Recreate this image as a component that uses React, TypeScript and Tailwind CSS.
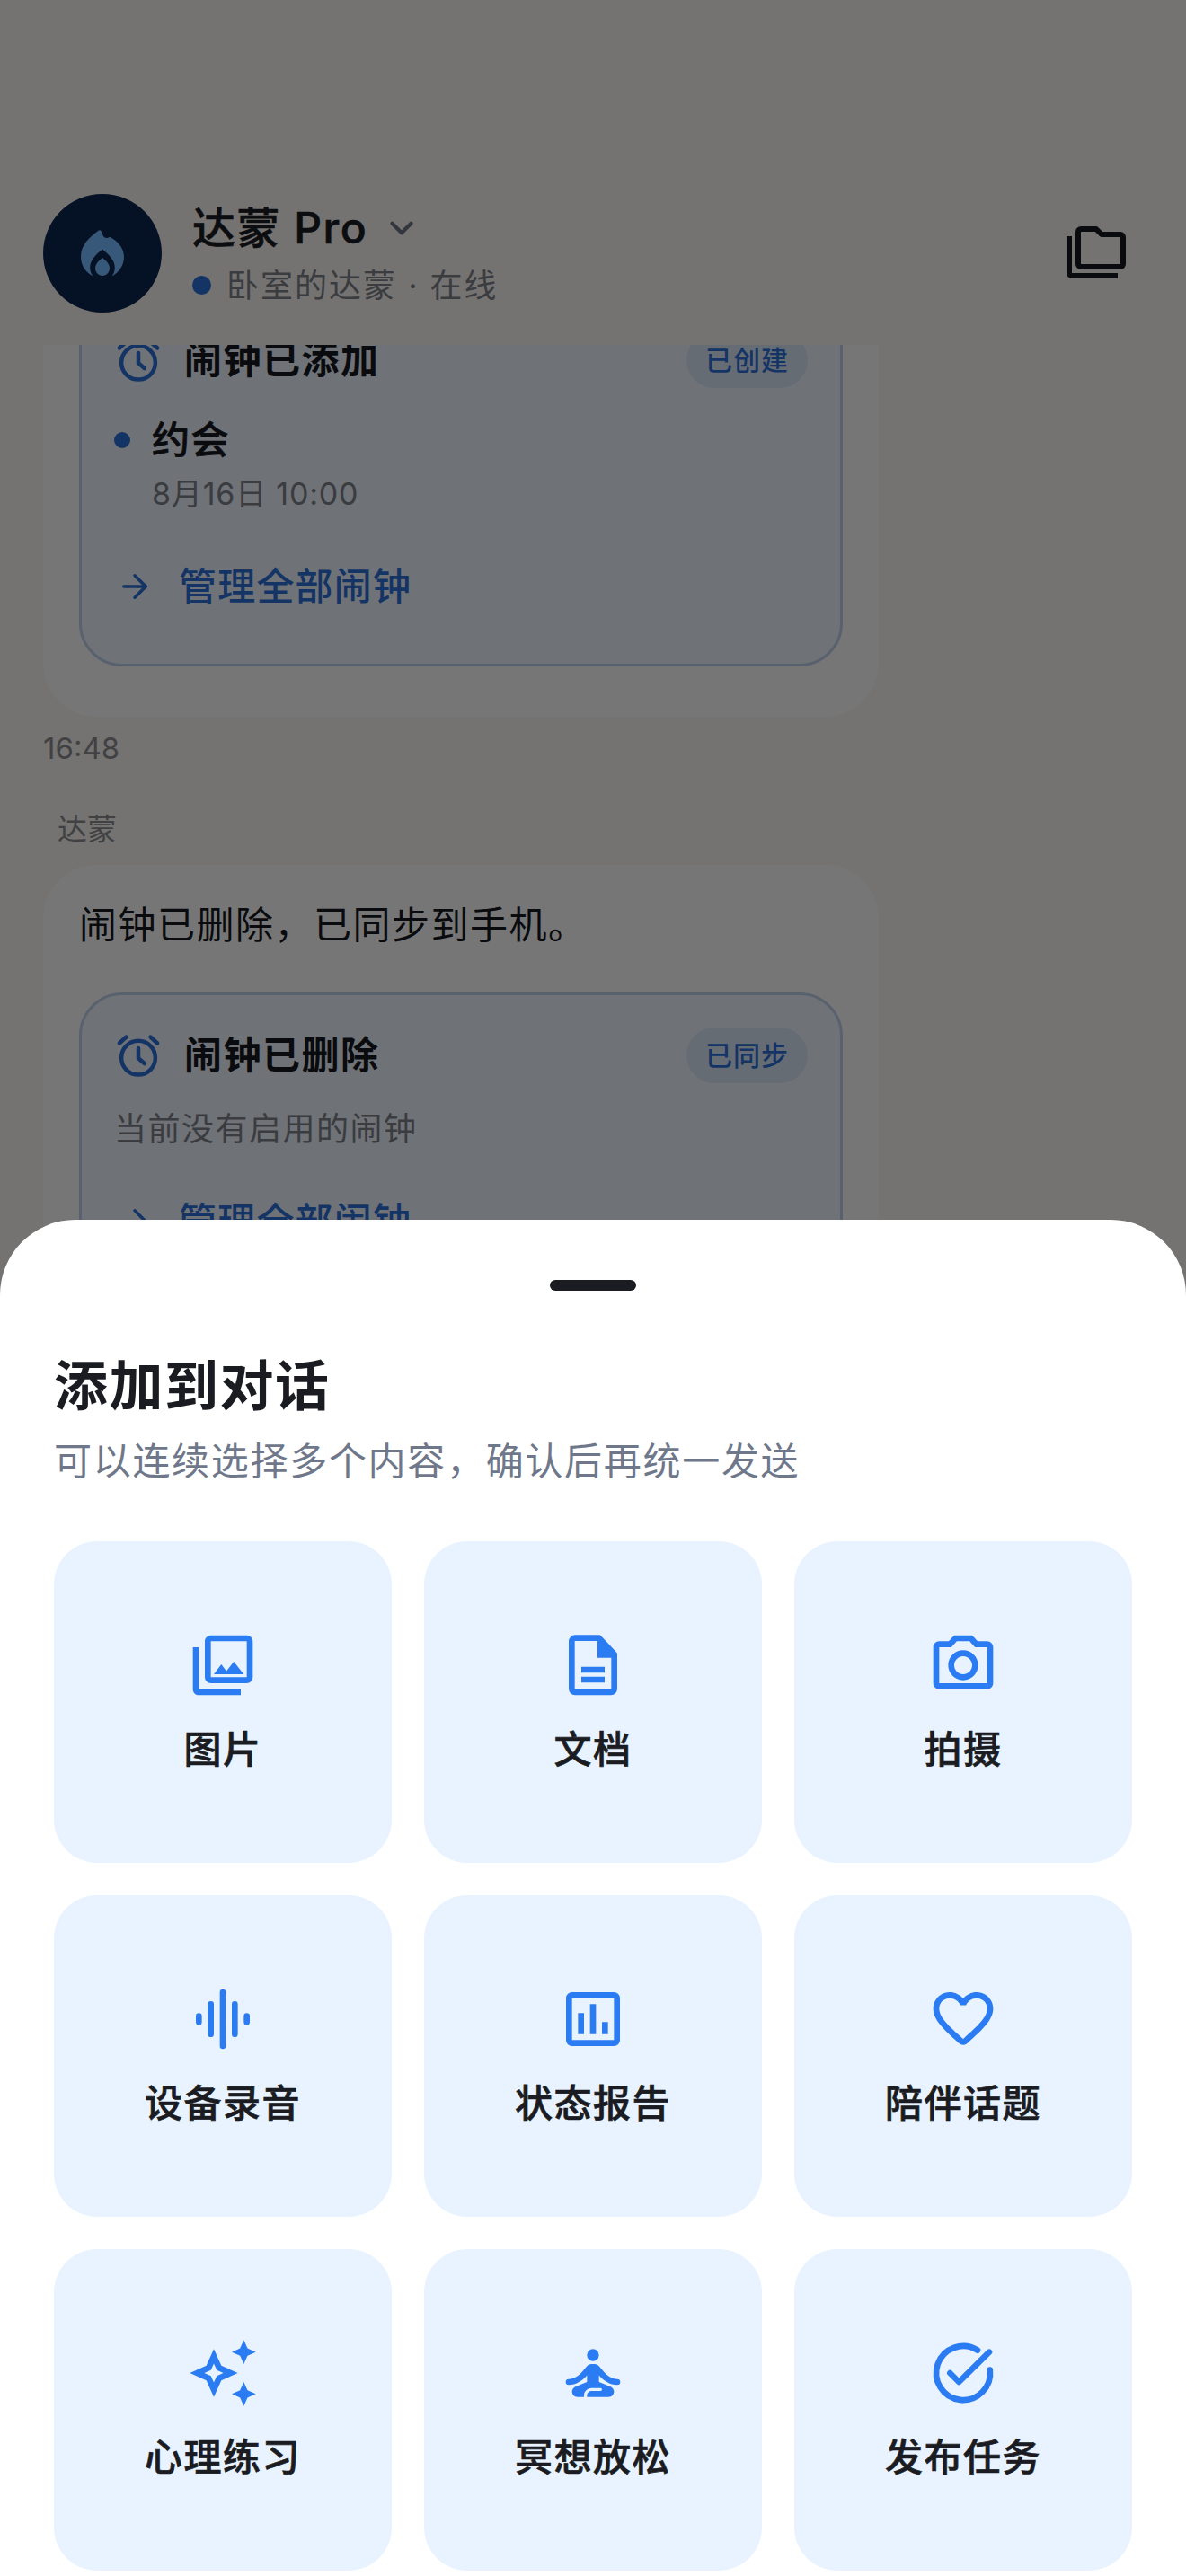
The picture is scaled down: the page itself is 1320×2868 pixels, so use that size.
import React from "react";
import { ChevronDown, ArrowRight } from "lucide-react";
import { MdOutlinePhotoLibrary, MdOutlinePhotoCamera, MdOutlineAssessment, MdOutlineAutoAwesome } from "react-icons/md";

const FONT = 'font-["Inter","Noto_Sans_CJK_SC",sans-serif]';

function AlarmIcon() {
  return (
    <svg viewBox="0 0 24 24" className="h-[54px] w-[54px] shrink-0" fill="none" stroke="#2b6fd6" strokeWidth="2" strokeLinecap="round">
      <circle cx="12" cy="13.2" r="8.4" />
      <path d="M12 8.4v5l3 2.600" />
      <path d="M2.600 6 6 2.900M21.400 6 18 2.900" />
    </svg>
  );
}

function AlarmCard({ title, badge, children }: { title: string; badge: string; children: React.ReactNode }) {
  return (
    <div className="rounded-[48px] border-[3px] border-[#bccfe8] bg-[#ecf3fb] px-[36px] pb-[55px] pt-[36px]">
      <div className="flex h-[62px] items-center justify-between">
        <div className="flex items-center gap-[24px]">
          <AlarmIcon />
          <span className="text-[42px] font-bold leading-[60px] tracking-[1.5px] text-[#17191e]">{title}</span>
        </div>
        <span className="rounded-full bg-[#d9e6f6] px-[21px] text-[30px] font-medium leading-[62px] tracking-[1px] text-[#2b6fd6]">{badge}</span>
      </div>
      {children}
      <div className="mt-[46px] flex items-center gap-[28px] pl-[2px] text-[42px] font-medium leading-[63px] tracking-[1.2px] text-[#2b6fd6]">
        <ArrowRight className="h-[42px] w-[42px]" strokeWidth={2} />
        <span>管理全部闹钟</span>
      </div>
    </div>
  );
}

const C = "#2b7cf2";

const I = "h-[80px] w-[80px]";

const icons: Record<string, React.ReactNode> = {
  image: <MdOutlinePhotoLibrary className={I} color={C} />,
  doc: (
    <svg viewBox="0 0 24 24" className={I}>
      <path d="M6 2.900h8l5.100 5.400V19.900a1.100 1.100 0 0 1-1.100 1.100H6a1.100 1.100 0 0 1-1.100-1.100V4A1.100 1.100 0 0 1 6 2.900z" fill="none" stroke={C} strokeWidth="2" strokeLinejoin="round" />
      <path d="M13.500 2.500l6.500 6.700v.3h-6.500z" fill={C} />
      <path d="M8.100 13.500h7.800M8.100 16.800h7.800" fill="none" stroke={C} strokeWidth="2" />
    </svg>
  ),
  camera: <MdOutlinePhotoCamera className={I} color={C} />,
  wave: (
    <svg viewBox="0 0 24 24" className={I}>
      <path d="M4 11v2M8 7v10M12 3v18M16 7v10M20 11v2" fill="none" stroke={C} strokeWidth="2" strokeLinecap="round" />
    </svg>
  ),
  chart: <MdOutlineAssessment className={I} color={C} />,
  heart: (
    <svg viewBox="0 0 24 24" className={I}>
      <path
        d="M19.660 3.990c-2.640-1.800-5.900-.96-7.660 1.100-1.760-2.060-5.020-2.900-7.660-1.100-1.400.96-2.280 2.580-2.340 4.290-.14 3.880 3.300 6.990 8.550 11.760l.1.09c.76.69 1.930.69 2.690-.01l.11-.1c5.250-4.760 8.680-7.870 8.550-11.750-.06-1.700-.94-3.320-2.340-4.280zM12.100 18.550l-.1.1-.1-.1C7.140 14.240 4 11.390 4 8.500 4 6.500 5.500 5 7.500 5c1.540 0 3.040.99 3.570 2.360h1.870C13.460 5.990 14.960 5 16.500 5c2 0 3.500 1.500 3.500 3.500 0 2.890-3.140 5.740-7.900 10.050z"
        fill={C}
      />
    </svg>
  ),
  sparkles: <MdOutlineAutoAwesome className={I} color={C} />,
  meditate: (
    <svg viewBox="0 0 24 24" className={I}>
      <circle cx="12" cy="6" r="2" fill={C} />
      <path
        d="M20.100 16a1 1 0 0 0 0-2C18.200 14 16.600 12.750 15.400 11.320l-1.340-1.600c-.38-.46-.94-.72-1.530-.72h-1.050c-.59 0-1.150.26-1.530.72l-1.340 1.600C7.400 12.750 5.800 14 3.900 14a1 1 0 0 0 0 2C6.400 16 8.500 14.500 10 12.750V15l-3.880 1.550c-.67.27-1.120.93-1.120 1.660C5 19.200 5.800 20 6.790 20H9v-.5c0-1.380 1.120-2.500 2.500-2.500h3c.28 0 .5.22.5.5s-.22.5-.5.5h-3c-.83 0-1.500.67-1.500 1.500v.5h7.210c.99 0 1.790-.8 1.790-1.790 0-.73-.45-1.390-1.120-1.660L14 15v-2.250C15.500 14.500 17.600 16 20.100 16z"
        fill={C}
      />
    </svg>
  ),
  check: (
    <svg viewBox="0 0 24 24" className={I}>
      <path d="M16.800 4.400A9 9 0 1 0 20.950 11" fill="none" stroke={C} strokeWidth="2" strokeLinecap="round" />
      <path d="M7.600 12l3 3L20.700 5" fill="none" stroke={C} strokeWidth="2" strokeLinecap="round" strokeLinejoin="round" />
    </svg>
  ),
};

const tiles = [
  ["image", "图片"],
  ["doc", "文档"],
  ["camera", "拍摄"],
  ["wave", "设备录音"],
  ["chart", "状态报告"],
  ["heart", "陪伴话题"],
  ["sparkles", "心理练习"],
  ["meditate", "冥想放松"],
  ["check", "发布任务"],
];

export default function App() {
  return (
    <div className={`relative flex h-[2868px] w-[1320px] flex-col overflow-hidden bg-[#f8f5f1] ${FONT}`}>
      <header className="relative z-10 flex h-[384px] shrink-0 items-start justify-between bg-[#f8f5f1] pl-[48px] pr-[67px] pt-[216px]">
        <div className="flex items-center gap-[34px]">
          <div className="flex h-[132px] w-[132px] items-center justify-center rounded-full bg-[#0c2650]">
            <svg viewBox="0 0 48 52" className="h-[52px] w-[48px]">
              <path
                d="M20 .5c1.800-1 3 1 3.600 3 .8 2.700 2 5.400 5 5.500 1.500 0 2.500-.8 3.700-1.300C41 12.500 48 20 48 30c0 9.500-5.600 17.500-13.500 21.500 2-2.500 3.300-5.800 3.300-9.500 0-8-6-14-13.800-20.500C16 28 10.200 34 10.200 42c0 3.700 1.300 7 3.300 9.500C5.600 47.500 0 39.500 0 30 0 16 10 8 20 .5z"
                fill="#76bcff"
              />
              <path d="M24 31c5 4 8 7.500 8 11.500 0 4.700-3.600 8.500-8 8.500s-8-3.800-8-8.500c0-4 3-7.500 8-11.500z" fill="#76bcff" />
            </svg>
          </div>
          <div>
            <div className="flex items-center gap-[17px]">
              <span className="text-[48px] font-medium leading-[64px] tracking-[1.5px] text-[#1a1c22] [-webkit-text-stroke:0.6px_#1a1c22]">达蒙 Pro</span>
              <ChevronDown className="h-[42px] w-[42px] text-[#6d7484]" strokeWidth={2.4} />
            </div>
            <div className="mt-[7px] flex items-center gap-[17px]">
              <span className="h-[21px] w-[21px] rounded-full bg-[#2b6fd6]" />
              <span className="text-[36px] leading-[50px] tracking-[2px] text-[#7c7f88]">卧室的达蒙 · 在线</span>
            </div>
          </div>
        </div>
        <svg viewBox="0 0 66 58" className="mt-[36px] h-[58px] w-[66px]" fill="none" stroke="#17191e" strokeWidth="6">
          <path d="M3 11v41a3 3 0 0 0 3 3h51" />
          <path d="M16 3h17l6 6h21a3 3 0 0 1 3 3v30a3 3 0 0 1-3 3H16a3 3 0 0 1-3-3V6a3 3 0 0 1 3-3z" strokeLinejoin="round" />
        </svg>
      </header>

      <main className="mt-[-93px] px-[48px]">
        <div className="w-[930px] rounded-[60px] bg-[#fbfbfb] px-[40px] pb-[56px] pt-[40px]">
          <AlarmCard title="闹钟已添加" badge="已创建">
            <div className="relative mt-[26px] pl-[42px]">
              <span className="absolute left-0 top-[23px] h-[18px] w-[18px] rounded-full bg-[#2b6fd6]" />
              <div className="text-[42px] font-medium leading-[63px] tracking-[1.5px] text-[#17191e] [-webkit-text-stroke:0.7px_#17191e]">约会</div>
              <div className="mt-[4px] text-[34px] leading-[50px] tracking-[.8px] text-[#7c7f88]">8月16日 10:00</div>
            </div>
          </AlarmCard>
        </div>
        <div className="mt-[10px] text-[33px] leading-[50px] text-[#8b8b8f]">16:48</div>
        <div className="mt-[40px] pl-[16px] text-[33px] leading-[50px] text-[#8b8b8f]">达蒙</div>
        <div className="mt-[15px] w-[930px] rounded-[60px] bg-[#fbfbfb] px-[40px] pb-[55px] pt-[35px]">
          <p className="text-[42px] leading-[63px] tracking-[1.5px] text-[#17191e]">闹钟已删除，已同步到手机。</p>
          <div className="mt-[44px]">
            <AlarmCard title="闹钟已删除" badge="已同步">
              <div className="mt-[26px] text-[36px] leading-[50px] tracking-[1.5px] text-[#7c7f88]">当前没有启用的闹钟</div>
            </AlarmCard>
          </div>
        </div>
      </main>

      <div className="absolute inset-0 z-20 bg-black/[.53]" />

      <section className="absolute inset-x-0 bottom-0 z-30 h-[1510px] rounded-t-[84px] bg-white px-[60px] pt-[67px]">
        <div className="mx-auto h-[12px] w-[96px] rounded-full bg-[#1a1c22]" />
        <h2 className="mt-[64px] text-[60px] font-bold leading-[84px] tracking-[1.5px] text-[#1a1c22]">添加到对话</h2>
        <p className="mt-[12px] text-[42px] leading-[59px] tracking-[1.7px] text-[#6f788a]">可以连续选择多个内容，确认后再统一发送</p>
        <div className="mt-[60px] grid grid-cols-3 gap-[36px]">
          {tiles.map(([icon, label]) => (
            <div key={label} className="flex h-[358px] flex-col items-center justify-center gap-[24px] rounded-[48px] bg-[#e8f3ff]">
              {icons[icon]}
              <span className="text-[42px] font-medium leading-[59px] tracking-[1.5px] text-[#1a1c22] [-webkit-text-stroke:0.7px_#1a1c22]">{label}</span>
            </div>
          ))}
        </div>
      </section>
    </div>
  );
}
